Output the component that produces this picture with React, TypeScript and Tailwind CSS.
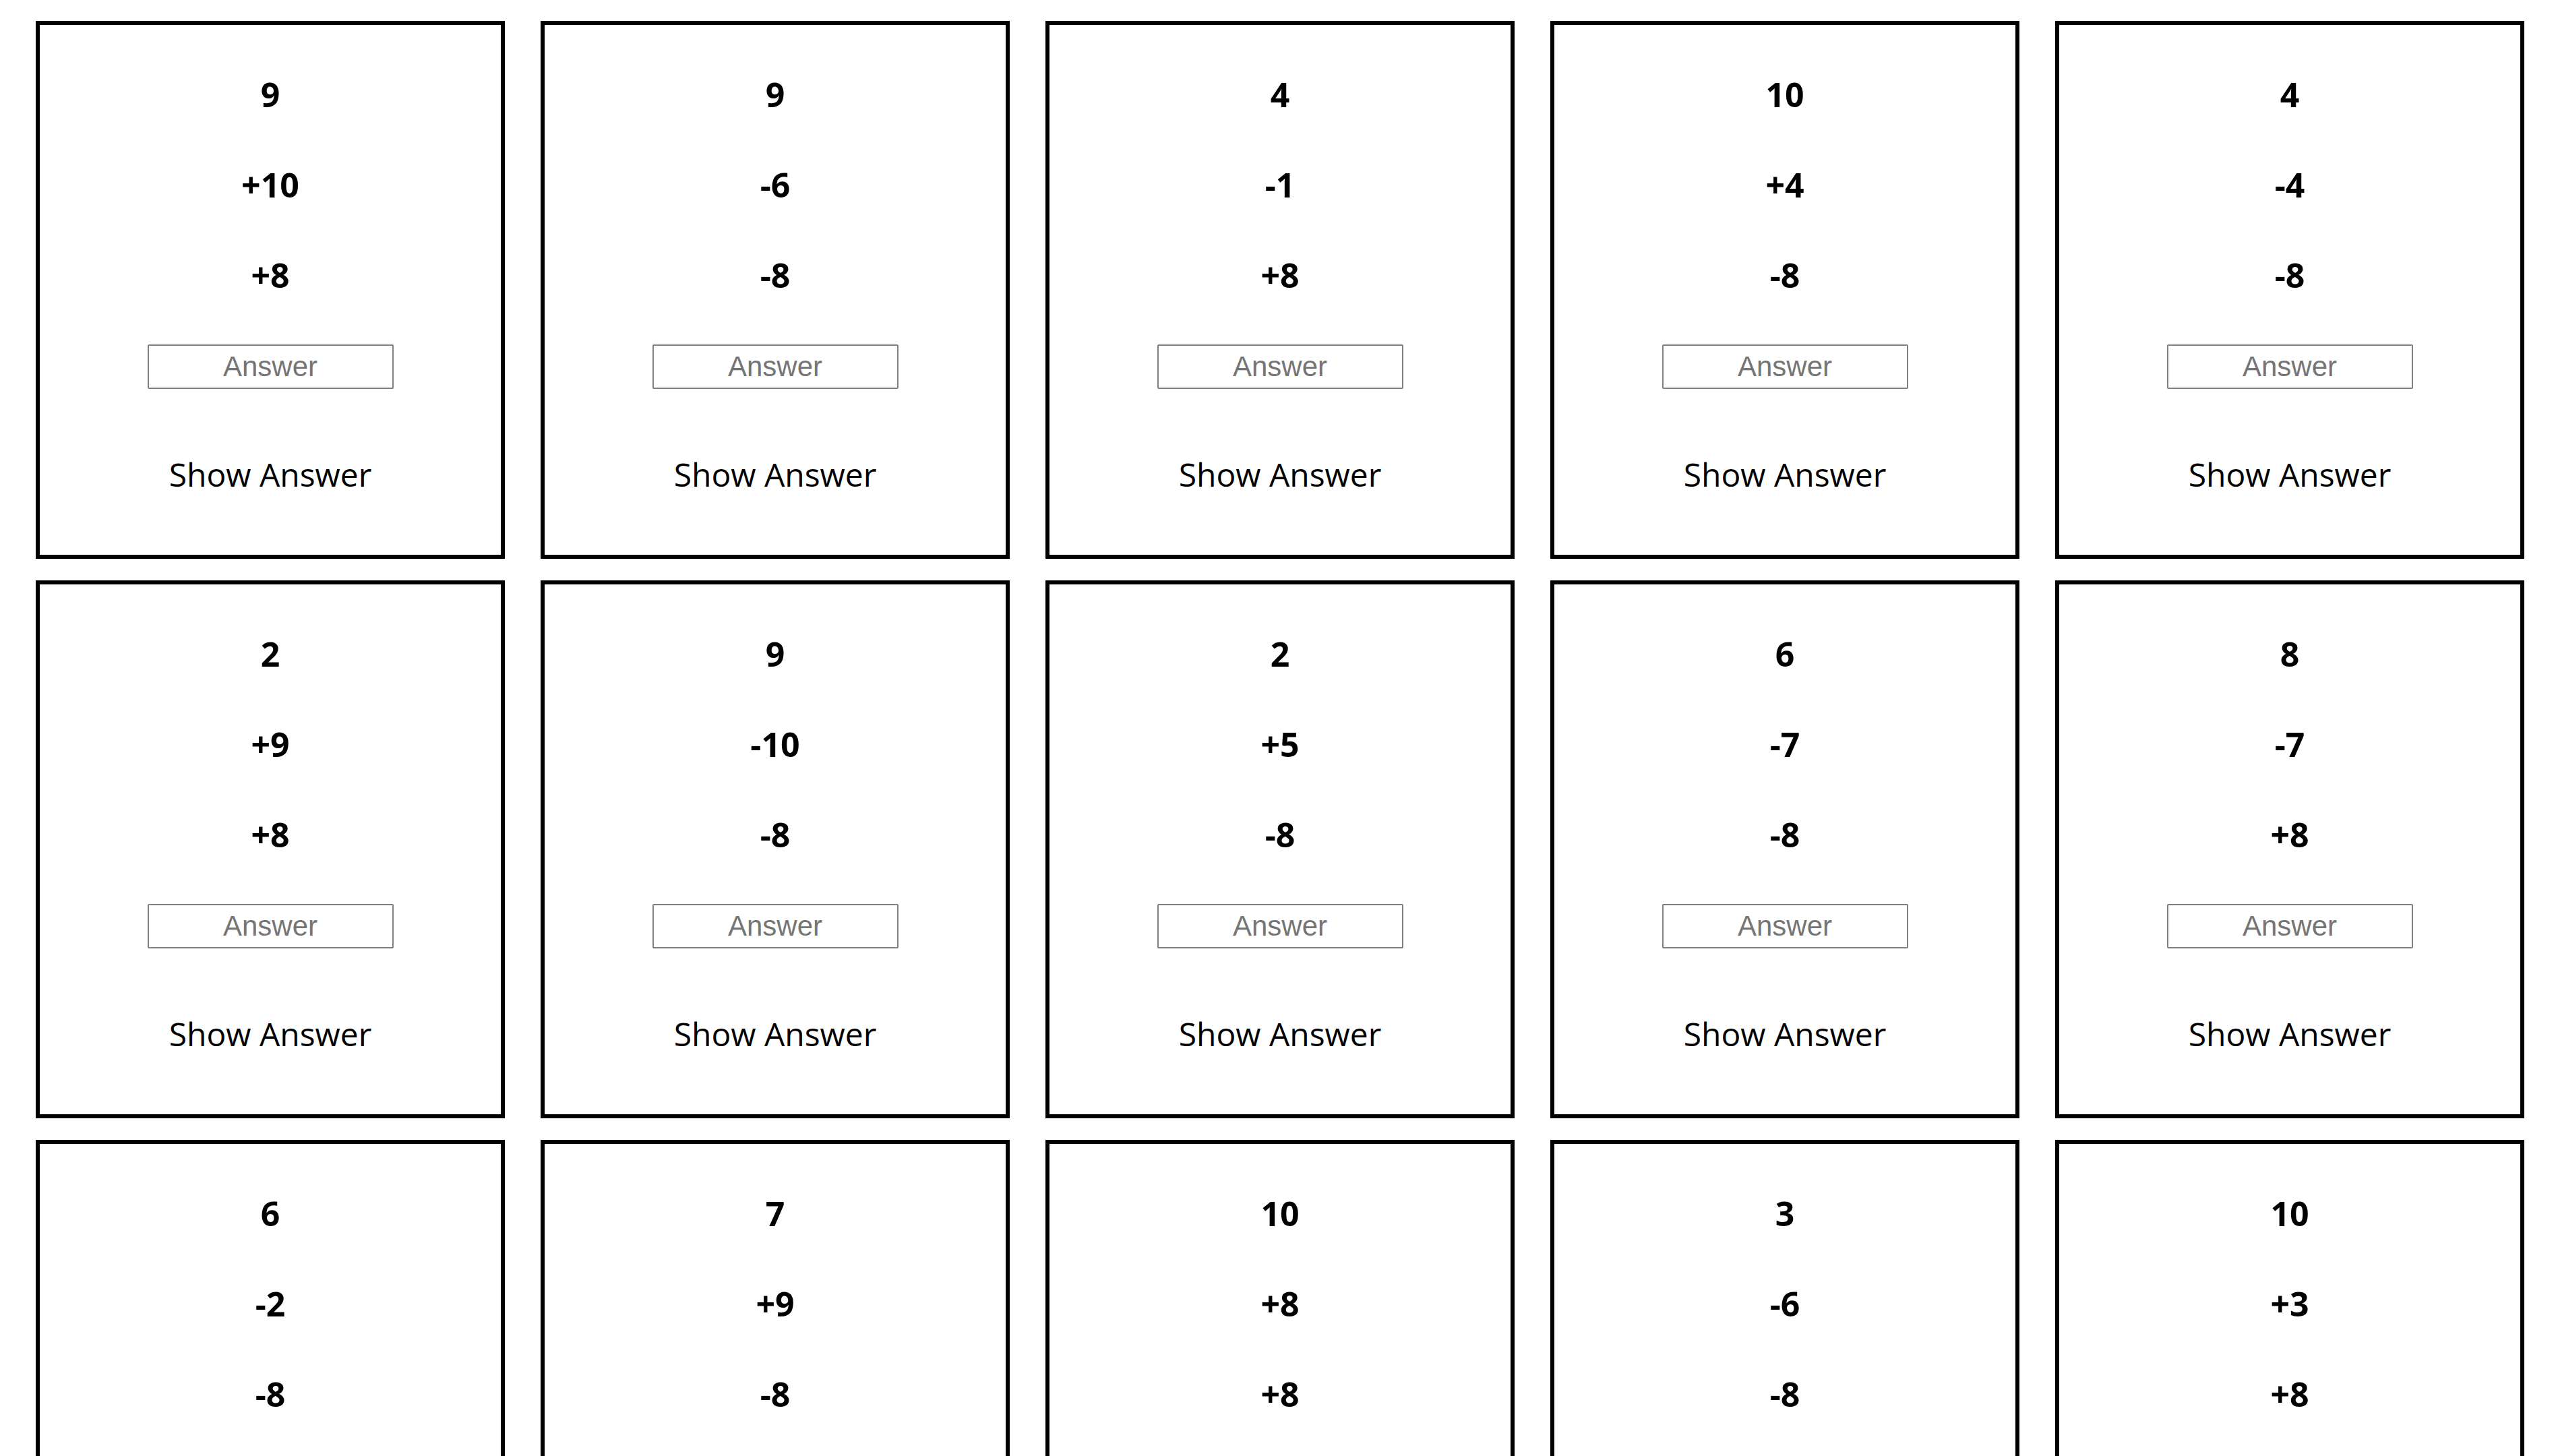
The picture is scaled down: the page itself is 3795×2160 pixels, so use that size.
import React from 'react';

const problems: string[][] = [
  ['9', '+10', '+8'],
  ['9', '-6', '-8'],
  ['4', '-1', '+8'],
  ['10', '+4', '-8'],
  ['4', '-4', '-8'],
  ['2', '+9', '+8'],
  ['9', '-10', '-8'],
  ['2', '+5', '-8'],
  ['6', '-7', '-8'],
  ['8', '-7', '+8'],
  ['6', '-2', '-8'],
  ['7', '+9', '-8'],
  ['10', '+8', '+8'],
  ['3', '-6', '-8'],
  ['10', '+3', '+8'],
];

function Card({ nums }: { nums: string[] }) {
  return (
    <div className="h-[798px] border-[6px] border-black bg-white flex flex-col items-center pt-[36px] font-['Open_Sans',sans-serif]">
      {nums.map((n, i) => (
        <div key={i} className="h-[134px] flex items-center justify-center text-[50px] leading-none font-bold text-black">
          {n}
        </div>
      ))}
      <input
        type="text"
        placeholder="Answer"
        className="mt-[36px] w-[365px] h-[66px] border-2 border-[#808080] rounded-[2px] text-center text-[42px] font-['Liberation_Sans',Arial,sans-serif] placeholder:text-[#757575] outline-none"
      />
      <button className="mt-[103px] text-[48px] leading-none text-black font-['Open_Sans',sans-serif] cursor-pointer">
        Show Answer
      </button>
    </div>
  );
}

export default function App() {
  return (
    <div className="min-h-screen bg-white pt-[31px] pl-[53px] pr-[50px] pb-[32px]">
      <div className="grid grid-cols-5 gap-x-[53px] gap-y-[32px]">
        {problems.map((p, i) => (
          <Card key={i} nums={p} />
        ))}
      </div>
    </div>
  );
}
